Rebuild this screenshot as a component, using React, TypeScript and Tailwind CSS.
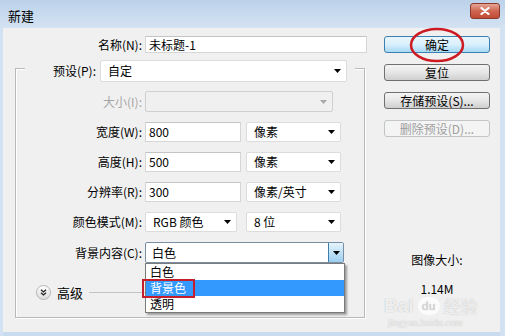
import React from "react";

const FONT = '"Noto Sans CJK SC", "Microsoft YaHei", "Noto Sans", sans-serif';

function Arrow({ color = "#000" }: { color?: string }) {
  return (
    <svg width="7" height="4" viewBox="0 0 7 4" className="shrink-0">
      <polygon points="0,0 7,0 3.5,4" fill={color} />
    </svg>
  );
}

function Select({
  w,
  h = 20,
  text,
  disabled = false,
}: {
  w: string;
  h?: number;
  text?: string;
  disabled?: boolean;
}) {
  return (
    <div
      className={`${w} flex items-center justify-between pl-[7px] pr-[5px] border rounded-[2px] ${
        disabled ? "bg-[#f0f0f0] border-[#d0d0d0]" : "bg-white border-[#dcdcdc]"
      }`}
      style={{ height: h }}
    >
      <span className="leading-none">{text}</span>
      <Arrow color={disabled ? "#a8a8a8" : "#000"} />
    </div>
  );
}

function Input({ w, text, h = 20 }: { w: string; text: string; h?: number }) {
  return (
    <div
      className={`${w} flex items-center pl-[3px] bg-white border border-[#d6d6d6] border-t-[#c4c4c4]`}
      style={{ height: h }}
    >
      <span className="leading-none">{text}</span>
    </div>
  );
}

function Row({
  label,
  children,
  mt = "mt-[10px]",
  h = 20,
  gray = false,
}: {
  label: string;
  children: React.ReactNode;
  mt?: string;
  h?: number;
  gray?: boolean;
}) {
  return (
    <div className={`flex items-center ${mt}`} style={{ height: h }}>
      <div className={`w-[126px] text-right leading-none ${gray ? "text-[#a6a6a6]" : "text-black"}`}>
        {label}
      </div>
      <div className="ml-[3px] flex items-center">{children}</div>
    </div>
  );
}

function Btn({
  children,
  mt,
  kind = "normal",
}: {
  children: React.ReactNode;
  mt: string;
  kind?: "normal" | "default" | "disabled";
}) {
  const cls =
    kind === "default"
      ? "border-[#3c7fb1] bg-gradient-to-b from-[#eaf6fd] via-[#d9f0fc] to-[#a7d9f5] text-black"
      : kind === "disabled"
      ? "border-[#c2c5c8] bg-[#f4f4f4] text-[#a0a0a0]"
      : "border-[#707070] bg-gradient-to-b from-[#f4f4f4] via-[#e6e6e6] to-[#cfcfcf] text-black";
  return (
    <div
      className={`${mt} w-[106px] h-[17px] border rounded-[3px] flex items-center justify-center leading-none ${cls}`}
    >
      {children}
    </div>
  );
}

export default function App() {
  return (
    <div
      className="relative w-[505px] h-[336px] overflow-hidden flex flex-col bg-[#d3e2f2] text-[12px] text-black"
      style={{ fontFamily: FONT }}
    >
      {/* Title bar */}
      <div className="h-[28px] flex items-center justify-between bg-gradient-to-b from-[#bcd2ea] to-[#d4e3f3] pl-[8px] pr-[5px]">
        <span className="text-[13px] leading-none mt-[2px]">新建</span>
        <div className="w-[30px] h-[16px] -mt-[6px] rounded-[3px] border border-[#8c3a2e] bg-gradient-to-b from-[#e4a595] via-[#cf6652] to-[#c24a35] flex items-center justify-center">
          <svg width="10" height="8" viewBox="0 0 10 8">
            <path d="M1.5 1 L8.5 7 M8.5 1 L1.5 7" stroke="#fff" strokeWidth="2.2" strokeLinecap="round" />
          </svg>
        </div>
      </div>

      {/* Body */}
      <div className="flex-1 ml-[3px] mr-[5px] bg-[#f0f0f0] flex border-b-[4px] border-b-[#c9dbef] shadow-[0_3px_0_#1e3550]">
        {/* Left column */}
        <div className="w-[365px] flex flex-col">
          <div className="mt-[8px] h-[17px] flex items-center">
            <div className="w-[139px] text-right leading-none">名称(N):</div>
            <div className="ml-[3px]">
              <Input w="w-[222px]" h={17} text="未标题-1" />
            </div>
          </div>

          {/* Group box */}
          <div className="mt-[15px] ml-[12px] w-[350px] h-[250px] border border-[#b9b9b9] shadow-[inset_1px_1px_0_#ffffff,1px_1px_0_#ffffff] flex flex-col">
            <div className="-mt-[9px] ml-[9px] w-[330px] h-[22px] bg-[#f0f0f0] flex items-center">
              <div className="w-[71px] text-right leading-none">预设(P):</div>
              <div className="ml-[4px]">
                <Select w="w-[247px]" h={22} text="自定" />
              </div>
            </div>
            <Row label="大小(I):" mt="mt-[9px]" h={21} gray>
              <Select w="w-[188px]" h={21} disabled />
            </Row>
            <Row label="宽度(W):">
              <Input w="w-[96px]" text="800" />
              <div className="ml-[5px]">
                <Select w="w-[95px]" text="像素" />
              </div>
            </Row>
            <Row label="高度(H):">
              <Input w="w-[96px]" text="500" />
              <div className="ml-[5px]">
                <Select w="w-[95px]" text="像素" />
              </div>
            </Row>
            <Row label="分辨率(R):">
              <Input w="w-[96px]" text="300" />
              <div className="ml-[5px]">
                <Select w="w-[95px]" text="像素/英寸" />
              </div>
            </Row>
            <Row label="颜色模式(M):">
              <Select w="w-[92px]" text="RGB 颜色" />
              <div className="ml-[9px]">
                <Select w="w-[95px]" text="8 位" />
              </div>
            </Row>
            <Row label="背景内容(C):" h={21}>
              <div className="w-[199px] h-[21px] flex items-center justify-between bg-white border border-[#7a8fa6] rounded-[2px]">
                <span className="pl-[6px] leading-none">白色</span>
                <div className="w-[15px] h-[19px] border-l border-[#3c7fb1] bg-gradient-to-b from-[#e5f4fc] to-[#9ccff0] flex items-center justify-center">
                  <Arrow />
                </div>
              </div>
            </Row>
            <div className="mt-[22px] h-[15px] flex items-center">
              <div className="ml-[20px] w-[15px] h-[15px] rounded-full border border-[#b5b5b5] bg-gradient-to-b from-white to-[#dcdcdc] flex items-center justify-center">
                <svg width="7" height="7" viewBox="0 0 7 7">
                  <path d="M1 0.8 L3.5 3 L6 0.8 M1 3.8 L3.5 6 L6 3.8" stroke="#222" strokeWidth="1.3" fill="none" />
                </svg>
              </div>
              <span className="ml-[6px] text-[13px] leading-none">高级</span>
              <div className="ml-[6px] w-[70px] h-px bg-[#c4c4c4]" />
            </div>
          </div>
        </div>

        {/* Right column */}
        <div className="ml-[16px] flex flex-col">
          <Btn mt="mt-[8px]" kind="default">确定</Btn>
          <Btn mt="mt-[11px]">复位</Btn>
          <Btn mt="mt-[11px]">存储预设(S)...</Btn>
          <Btn mt="mt-[11px]" kind="disabled">删除预设(D)...</Btn>
          <div className="mt-[115px] w-[106px] text-center leading-[16px]">图像大小:</div>
          <div className="mt-[13px] w-[106px] text-center leading-[16px]">1.14M</div>
        </div>
      </div>

      {/* Dropdown list overlay */}
      <div className="absolute left-[145px] top-[263px] w-[200px] h-[50px] bg-white border border-[#7a7a7a] shadow-[2px_2px_2px_rgba(0,0,0,0.35)] flex flex-col">
        <div className="h-[16px] pl-[4px] flex items-center leading-none">白色</div>
        <div className="h-[16px] pl-[4px] flex items-center leading-none bg-[#3399ff] text-white">背景色</div>
        <div className="h-[16px] pl-[4px] flex items-center leading-none">透明</div>
      </div>

      {/* Red annotation rectangle */}
      <div className="absolute left-[142px] top-[279px] w-[53px] h-[19px] border-[2px] border-[#c41f2a]" />

      {/* Red annotation ellipse */}
      <svg className="absolute left-[408px] top-[26px]" width="60" height="40" viewBox="0 0 60 40">
        <ellipse cx="29" cy="19" rx="26" ry="16" fill="none" stroke="#cc1b22" strokeWidth="2.5" />
      </svg>

      {/* Watermark */}
      <div className="absolute left-[384px] top-[296px] flex items-center gap-[4px] text-white/80 [text-shadow:0_0_1px_rgba(120,120,120,0.6)]">
        <span className="text-[19px] font-bold leading-none" style={{ fontFamily: '"Liberation Sans", sans-serif' }}>
          Bai
        </span>
        <span className="w-[22px] h-[18px] rounded-full bg-white/70 text-[11px] text-[#d8d8d8] flex items-center justify-center leading-none">
          du
        </span>
        <span className="text-[17px] leading-none">经验</span>
      </div>
      <div
        className="absolute left-[388px] top-[318px] text-[10px] leading-none text-white/70 [text-shadow:0_0_1px_rgba(120,120,120,0.5)]"
        style={{ fontFamily: '"Liberation Serif", serif' }}
      >
        jingyan.baidu.com
      </div>
    </div>
  );
}
